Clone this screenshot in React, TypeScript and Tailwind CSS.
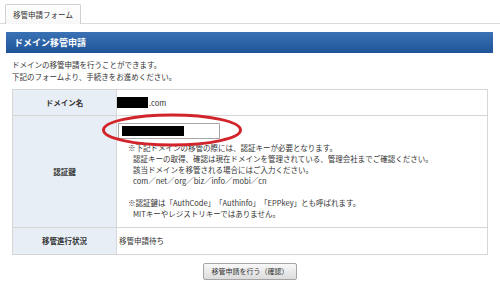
import React from 'react';

const labelCell =
  "flex w-[104px] shrink-0 items-center justify-center border-r border-[#d6d6d6] bg-[#e8eef5] font-bold";

export default function App() {
  return (
    <div className="relative h-[287px] w-[500px] overflow-hidden bg-white text-[#333] [text-spacing-trim:space-all] font-['Noto_Sans_CJK_JP','Noto_Sans',sans-serif]">
      {/* タブ */}
      <div className="flex h-[24px] items-end border-b border-[#dadada] pl-[5px]">
        <div className="-mb-px flex h-[20px] w-[76px] items-center justify-center rounded-t-[2px] border border-b-0 border-[#d0d0d0] bg-gradient-to-b from-white to-[#f7f7f7] text-[7.5px] leading-none">
          移管申請フォーム
        </div>
      </div>

      {/* 見出し */}
      <div className="ml-[6px] mt-[8px] flex h-[21px] w-[487px] items-center bg-gradient-to-b from-[#3a72b5] to-[#1f5598] px-[8px] text-[9px] font-bold leading-none text-white">
        ドメイン移管申請
      </div>

      <div className="mt-[6px] pl-[12px] text-[7.5px] leading-[12px]">
        <p>ドメインの移管申請を行うことができます。</p>
        <p>下記のフォームより、手続きをお進めください。</p>
      </div>

      {/* フォーム */}
      <div className="ml-[12px] mt-[6px] w-[476px] border border-[#d6d6d6] text-[7.5px]">
        <div className="flex h-[26px] border-b border-[#d6d6d6]">
          <div className={labelCell}>ドメイン名</div>
          <div className="flex items-center">
            <span className="mr-px inline-block h-[11px] w-[31px] bg-black" />
            <span>.com</span>
          </div>
        </div>

        <div className="flex h-[112px] border-b border-[#d6d6d6]">
          <div className={labelCell}>認証鍵</div>
          <div className="pt-[7px]">
            <div className="ml-px flex h-[16px] w-[102px] items-center border border-[#a8a8a8] bg-white pl-[3px]">
              <span className="inline-block h-[10px] w-[62px] bg-black" />
            </div>
            <div className="mt-[3px] leading-[11px]">
              <p className="pl-[11px]">※下記ドメインの移管の際には、認証キーが必要となります。</p>
              <p className="pl-[16px]">認証キーの取得、確認は現在ドメインを管理されている、管理会社までご確認ください。</p>
              <p className="pl-[16px]">該当ドメインを移管される場合にはご入力ください。</p>
              <p className="pl-[16px]">com／net／org／biz／info／mobi／cn</p>
              <p className="h-[11px]" />
              <p className="pl-[11px]">※認証鍵は「AuthCode」「Authinfo」「EPPkey」とも呼ばれます。</p>
              <p className="pl-[16px]">MITキーやレジストリキーではありません。</p>
            </div>
          </div>
        </div>

        <div className="flex h-[26px]">
          <div className={labelCell}>移管進行状況</div>
          <div className="flex items-center pl-[2px]">移管申請待ち</div>
        </div>
      </div>

      <div className="mt-[8px] flex justify-center">
        <button className="flex h-[17px] w-[94px] items-center justify-center rounded-[2px] border border-[#a5a5a5] bg-gradient-to-b from-[#f8f8f8] to-[#dcdcdc] text-[7px] leading-none text-[#333]">
          移管申請を行う（確認）
        </button>
      </div>

      {/* 赤い丸印 */}
      <svg
        className="absolute left-[101px] top-[113px]"
        width="142"
        height="34"
        viewBox="0 0 142 34"
      >
        <ellipse cx="71" cy="17" rx="68.5" ry="15" fill="none" stroke="#d2252b" strokeWidth="3" />
      </svg>
    </div>
  );
}
